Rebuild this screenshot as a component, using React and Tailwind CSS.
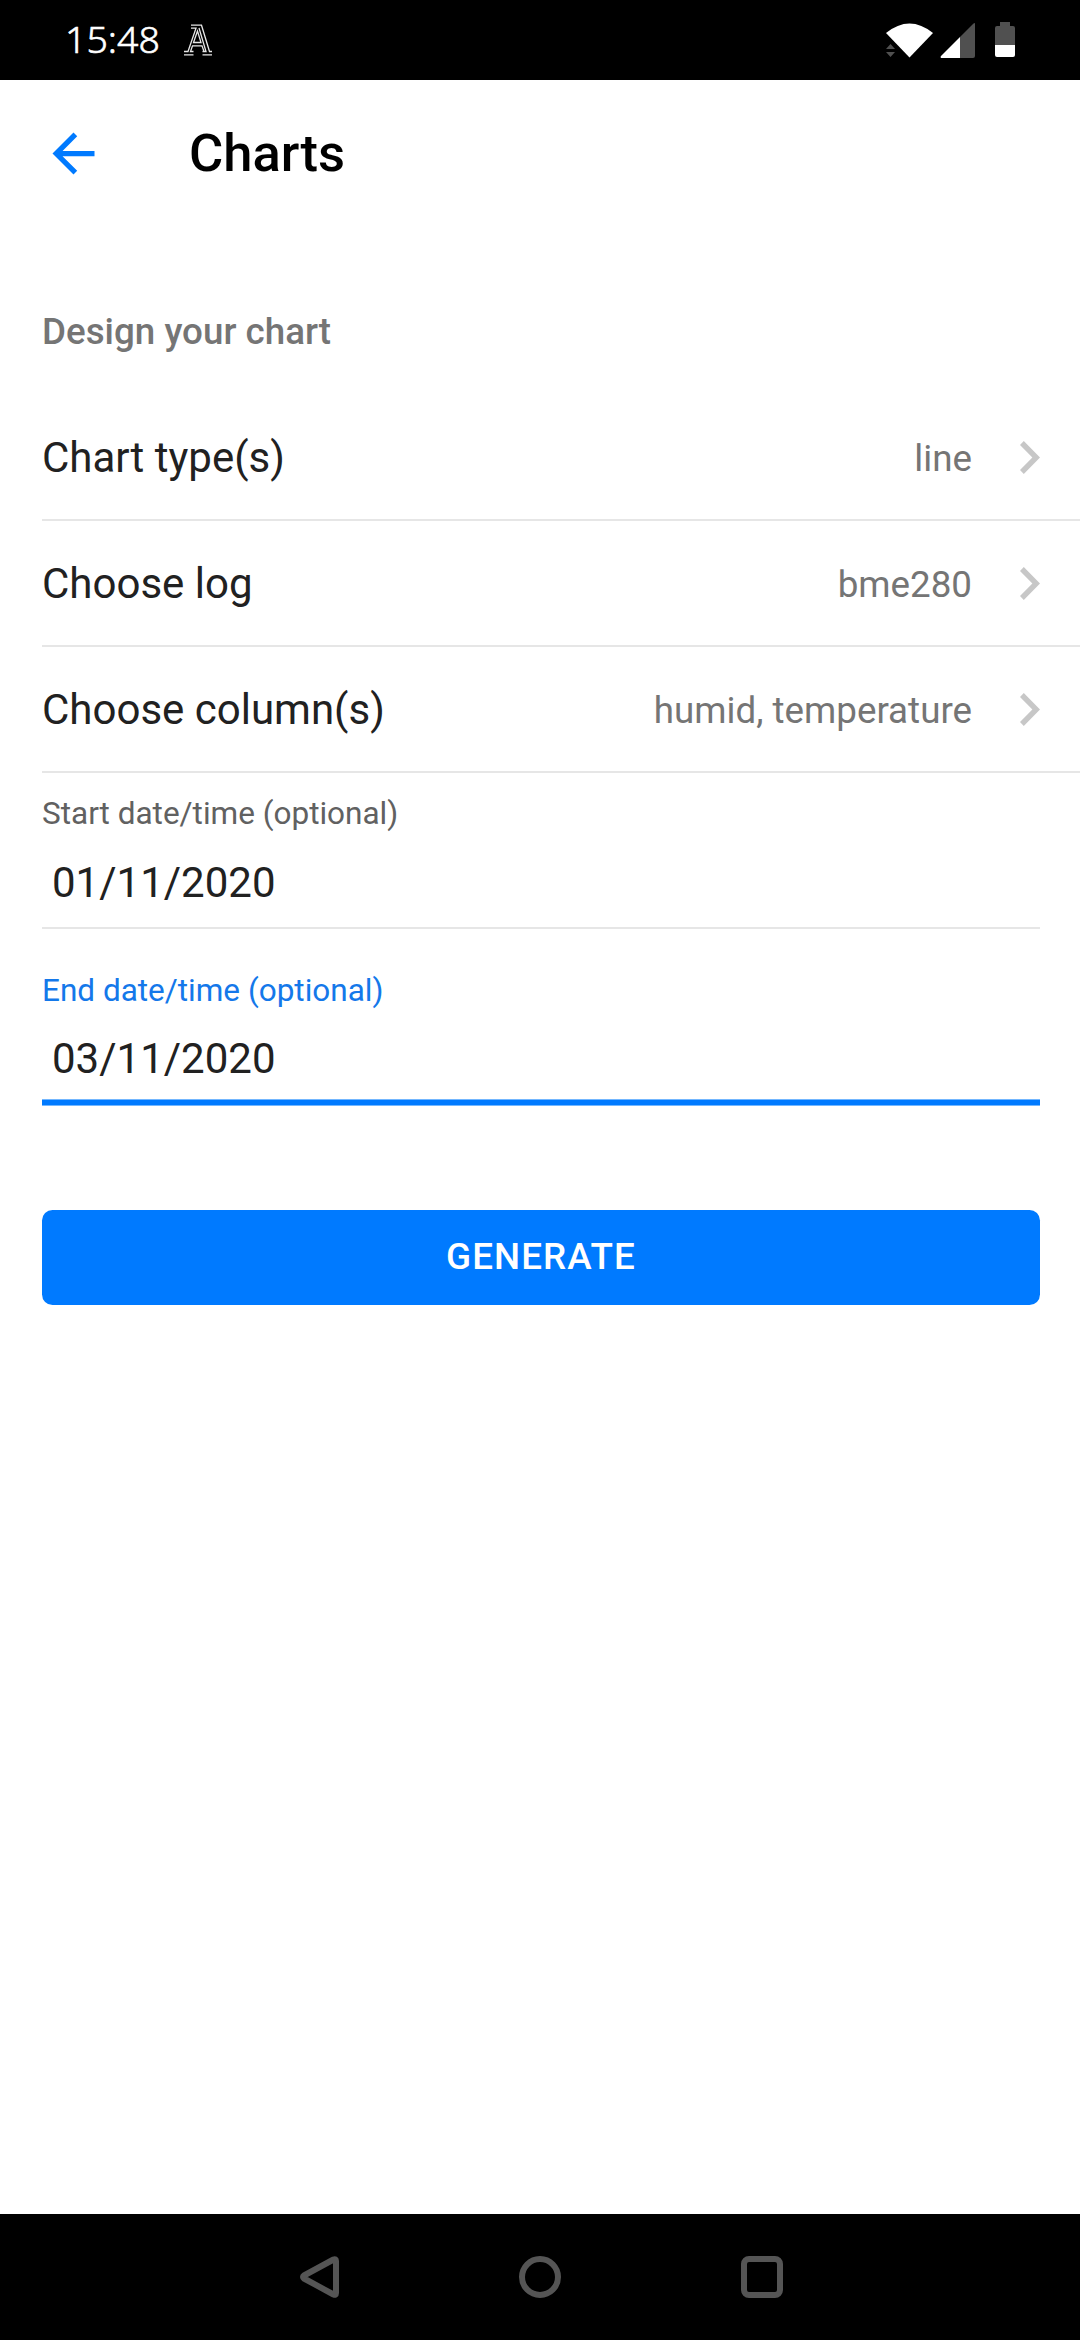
const rows = [
  { label: 'Chart type(s)', value: 'line' },
  { label: 'Choose log', value: 'bme280' },
  { label: 'Choose column(s)', value: 'humid, temperature' },
];

function StatusBar() {
  return (
    <div className="flex h-20 items-center bg-black pl-[65px] pr-[65px] text-white">
      <span className="-mt-[2px] w-[119px] font-['Noto_Sans',sans-serif] text-[37.5px] font-light leading-none [-webkit-text-stroke:0.6px_white]">15:48</span>
      <svg className="h-8 w-7" viewBox="0 0 28 32" fill="none" stroke="#e8e8e8" strokeWidth="1.3">
        <path d="M7 1.200H17.500L25.500 27.500H28M7 4.200H12L4 27.500H0M0 30.800H9.500M18.500 30.800H28" />
        <path d="M15 4L22 27.500H18.500M13.500 7L9.500 18.500H17ZM9.500 27.500H6.500L8.500 21.800H18L20 27.500" />
      </svg>
      <svg className="ml-auto h-9 w-[130px]" viewBox="885 22 130 36">
        <path d="M886 33Q909.500 14 933 33L909.500 57.500Z" fill="#fff" />
        <path d="M890.500 44L895 49H886ZM886 52H895L890.500 57Z" fill="#505050" />
        <path d="M975 24V56Q975 58 973 58H960V37L973 24Q975 22 975 24Z" fill="#505050" />
        <path d="M960 37V58H941Q940 57 941 56Z" fill="#fff" />
        <path d="M1000 22H1010V26H1013Q1015 26 1015 28V45H995V28Q995 26 997 26H1000Z" fill="#505050" />
        <path d="M995 45H1015V55Q1015 57 1013 57H997Q995 57 995 55Z" fill="#fff" />
      </svg>
    </div>
  );
}

function Row({ label, value }) {
  return (
    <div className="ml-[42px] flex h-[126px] items-center border-b-2 border-[#e6e6e6] pr-[40px]">
      <span className="mt-[2px] flex-1 text-[42px] leading-[50px] text-[#212121]">{label}</span>
      <span className="mt-[3px] text-[36.75px] leading-[44px] text-[#757575]">{value}</span>
      <svg className="ml-[48px] mt-px h-[33px] w-5" viewBox="8.590 6 7.410 12" preserveAspectRatio="none">
        <path d="M10 6L8.590 7.410 13.170 12l-4.580 4.590L10 18l6-6z" fill="#c7c7c7" />
      </svg>
    </div>
  );
}

export default function App() {
  return (
    <div className="flex h-[2340px] w-[1080px] flex-col bg-white font-[Roboto,sans-serif]">
      <StatusBar />
      <header className="flex h-[147px] items-center pl-[42px]">
        <svg className="size-[63px]" viewBox="0 0 24 24" fill="#007aff">
          <path d="M20 11H7.830l5.590-5.590L12 4l-8 8 8 8 1.410-1.410L7.830 13H20v-2z" />
        </svg>
        <h1 className="ml-[84px] text-[52.5px] font-medium leading-[63px] text-black">Charts</h1>
      </header>
      <main className="flex-1">
        <h2 className="ml-[42px] mt-[83px] text-[36.75px] font-medium leading-[44px] text-[#757575]">Design your chart</h2>
        <div className="mt-[41px]">
          {rows.map((r) => <Row key={r.label} {...r} />)}
        </div>
        <div className="ml-[42px] mr-[40px] h-[156px] border-b-2 border-[#e6e6e6] pt-[22px]">
          <div className="text-[31.5px] leading-[38px] text-[#616161]">Start date/time (optional)</div>
          <div className="ml-[10px] mt-[25px] text-[42px] leading-[50px] text-[#212121]">01/11/2020</div>
        </div>
        <div className="ml-[42px] mr-[40px] flex h-[177px] flex-col pt-[43px]">
          <div className="text-[31.5px] leading-[38px] text-[#1478ea]">End date/time (optional)</div>
          <div className="ml-[10px] mt-[24px] text-[42px] leading-[50px] text-[#212121]">03/11/2020</div>
          <div className="mt-auto h-[7px] border-y border-[#73b7ff] bg-[#007aff]" />
        </div>
        <button className="ml-[42px] mt-[104px] block h-[95px] w-[998px] rounded-[10.5px] bg-[#007aff] pb-[2px] text-[36.75px] font-medium leading-[93px] tracking-[0.03em] text-white">GENERATE</button>
      </main>
      <nav className="h-[126px] bg-black">
        <svg className="h-[126px] w-[1080px]" viewBox="0 2214 1080 126" fill="none" stroke="#555" strokeWidth="6" strokeLinejoin="round">
          <path d="M304 2275.500L333.500 2259.500Q336 2258.500 336 2261V2293Q336 2295.500 333.500 2294.500L304 2278.500Q302 2277 304 2275.500Z" />
          <circle cx="540" cy="2277" r="18" />
          <rect x="744" y="2259" width="36" height="36" rx="5" />
        </svg>
      </nav>
    </div>
  );
}
